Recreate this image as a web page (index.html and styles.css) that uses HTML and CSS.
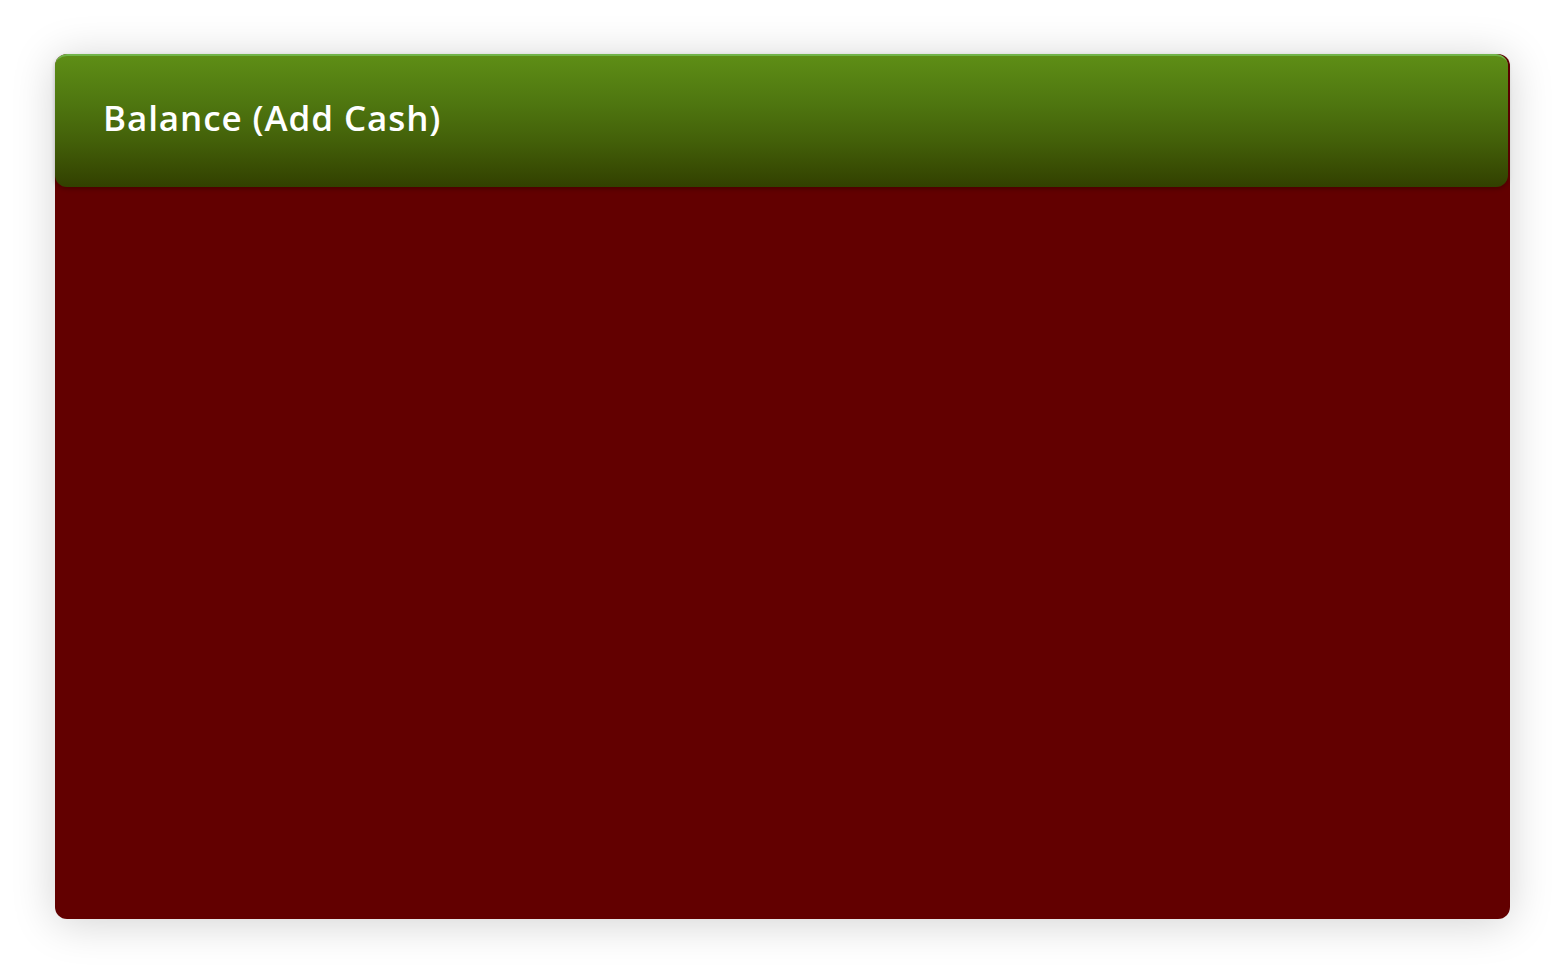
FILE: index.html
```html
<!DOCTYPE html>
<html>
<head>
<meta charset="utf-8">
<link rel="stylesheet" href="styles.css">
</head>
<body>
<div class="card">
  <div class="card-header">
    <h1 class="title">Balance (Add Cash)</h1>
  </div>
  <div class="card-body"></div>
</div>
</body>
</html>
```
FILE: styles.css
```css
html, body {
  margin: 0;
  padding: 0;
  background: #ffffff;
}
body {
  padding: 54px 0 57px 55px;
  font-family: "Open Sans", "Liberation Sans", sans-serif;
}
.card {
  width: 1455px;
  height: 865px;
  background: #620000;
  border-radius: 12px;
  box-shadow: 0 4px 44px rgba(0, 0, 0, 0.18);
  display: flex;
  flex-direction: column;
}
.card-header {
  height: 133px;
  margin-right: 2px;
  box-sizing: border-box;
  border-top: 2px solid #72b54a;
  border-radius: 12px;
  background: linear-gradient(to bottom, #5e8e16 0%, #4f7710 35%, #436009 65%, #324000 100%);
  box-shadow: 0 2px 4px rgba(0,0,0,0.25);
  display: flex;
  align-items: center;
  padding-left: 48px;
}
.title {
  margin: 0;
  color: #ffffff;
  font-size: 35px;
  font-weight: 600;
  letter-spacing: 0.9px;
  position: relative;
  top: -4px;
}
.card-body {
  flex: 1;
}
```
